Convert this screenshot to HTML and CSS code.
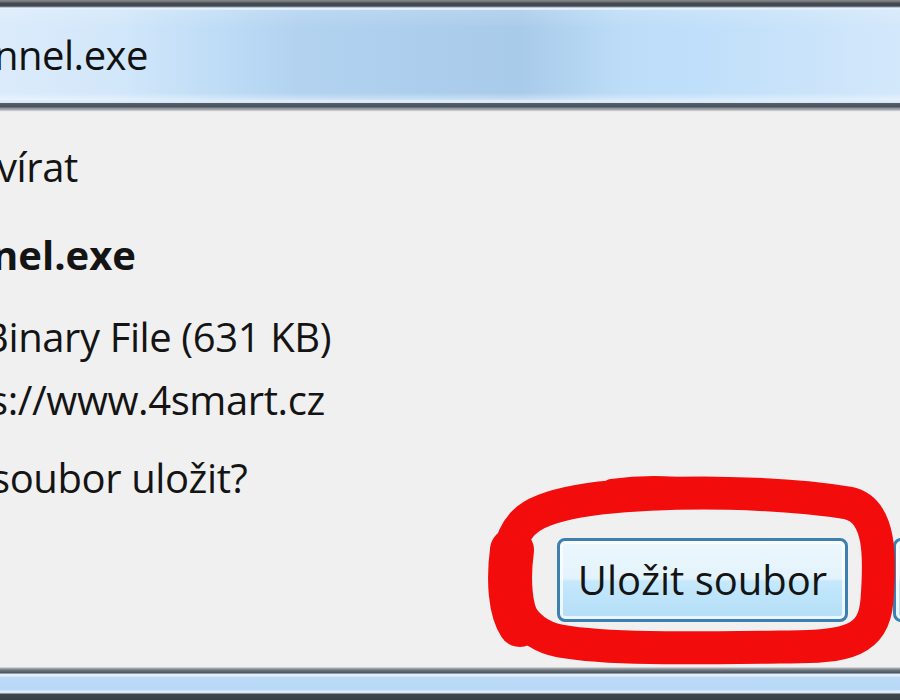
FILE: index.html
```html
<!DOCTYPE html>
<html lang="cs">
<head>
<meta charset="utf-8">
<title>Otevírání souboru</title>
<link rel="stylesheet" href="styles.css">
</head>
<body>
<div class="window">
  <div class="frame-top"></div>
  <div class="titlebar"><span class="title-text">nnel.exe</span></div>
  <div class="frame-sep"></div>
  <div class="content">
    <p class="line l1"><span class="off-v">vírat</span></p>
    <p class="line l2 bold"><span class="off-n">nel.exe</span></p>
    <p class="line l3"><span class="off-b">Binary File (631 KB)</span></p>
    <p class="line l4"><span class="off-s">s://www.4smart.cz</span></p>
    <p class="line l5"><span class="off-s2">soubor uložit?</span></p>
    <div class="buttons">
      <button class="btn">Uložit soubor</button>
      <button class="btn btn-2">Zrušit</button>
    </div>
  </div>
  <div class="frame-bottom"></div>
  <svg class="mark" width="900" height="700" viewBox="0 0 900 700" aria-hidden="true">
    <path d="M600 498 C 680 490, 780 492, 848 503 C 882 510, 880 560, 877 600 C 874 640, 850 648, 780 647 C 700 648, 610 650, 560 641 C 515 632, 506 590, 510 553 C 514 520, 535 506, 600 498 Z" fill="none" stroke="#f20c0c" stroke-width="33" stroke-linejoin="round"/>
    <path d="M512 550 C 508 580, 510 610, 520 625" fill="none" stroke="#f20c0c" stroke-width="44" stroke-linecap="round"/>
    <path d="M612 490 C 640 486, 670 486, 690 490" fill="none" stroke="#f20c0c" stroke-width="22" stroke-linecap="round"/>
  </svg>
</div>
</body>
</html>
```
FILE: styles.css
```css
html, body {
  margin: 0;
  padding: 0;
}
body {
  width: 900px;
  height: 700px;
  overflow: hidden;
  background: #f0f0f0;
  font-family: "Open Sans", "Noto Sans", "Liberation Sans", sans-serif;
  color: #141414;
}
.window {
  position: relative;
  width: 900px;
  height: 700px;
  display: flex;
  flex-direction: column;
  overflow: hidden;
}
.frame-top {
  height: 10px;
  flex: none;
  background: linear-gradient(to bottom, #8a8a8a 0, #6a6d70 2px, #444b53 3px, #3e4750 6px, #8d9aa8 7px, #e9f3fc 8px, #d9ebfb 10px);
}
.titlebar {
  height: 90px;
  flex: none;
  box-sizing: border-box;
  padding-top: 13px;
  background:
    linear-gradient(to bottom, rgba(255,255,255,0.15), rgba(255,255,255,0) 20%, rgba(255,255,255,0) 92%, rgba(255,255,255,0.4) 100%),
    linear-gradient(to right, #dbebfb 0, #d2e7fa 120px, #bedcf6 220px, #b2d2f0 300px, #acceec 430px, #a9cbea 520px, #bcdcf7 620px, #c0dffa 700px, #cbe4fa 820px, #d4e8fb 900px);
  overflow: hidden;
  white-space: nowrap;
}
.title-text {
  display: inline-block;
  margin-left: -6px;
  font-size: 40px;
  line-height: 63px;
  letter-spacing: -0.5px;
  color: #111;
}
.frame-sep {
  height: 12px;
  flex: none;
  background: linear-gradient(to bottom, #e2eefa 0, #d6e6f5 3px, #55606b 3px, #46505a 7px, #8c939b 8px, #a9adb2 10px, #e4e4e4 11px, #f0f0f0 12px);
}
.content {
  flex: 1;
  padding-top: 23px;
  white-space: nowrap;
}
.line {
  margin: 0;
  font-size: 40px;
  line-height: 63px;
  letter-spacing: -0.4px;
}
.bold {
  font-weight: 700;
  letter-spacing: 0;
}
.l2 { margin-top: 25px; }
.l3 { margin-top: 19px; }
.l5 { margin-top: 15px; }
.line span { display: inline-block; }
.off-v { margin-left: -3px; }
.off-n { margin-left: -8px; }
.off-b { margin-left: -17px; }
.off-s { margin-left: -11px; }
.off-s2 { margin-left: -9px; }
.buttons {
  display: flex;
  gap: 45px;
  margin-top: 29px;
  padding-left: 557px;
}
.btn {
  flex: none;
  width: 291px;
  height: 84px;
  box-sizing: border-box;
  border: 3px solid #3c7fb1;
  border-radius: 8px;
  box-shadow: inset 0 0 0 3px rgba(255,255,255,0.75);
  background: linear-gradient(to bottom, #edf7fd 0, #e3f3fc 48%, #c5e8fc 52%, #b3def7 100%);
  font-family: inherit;
  font-size: 40px;
  color: #141414;
  padding: 0;
  line-height: 1;
}
.frame-bottom {
  height: 33px;
  flex: none;
  background: linear-gradient(to bottom, #f0f0f0 0, #aeb3b8 1px, #6f777f 3px, #48505a 6px, #dcebf8 7px, #e6f1fb 9px, #bcdaf6 10px, #b8d8f6 23px, #e3effb 24px, #d6e4f1 26px, #3e454c 27px, #3a3f44 33px);
}
.mark {
  position: absolute;
  left: 0;
  top: 0;
  pointer-events: none;
}
```
